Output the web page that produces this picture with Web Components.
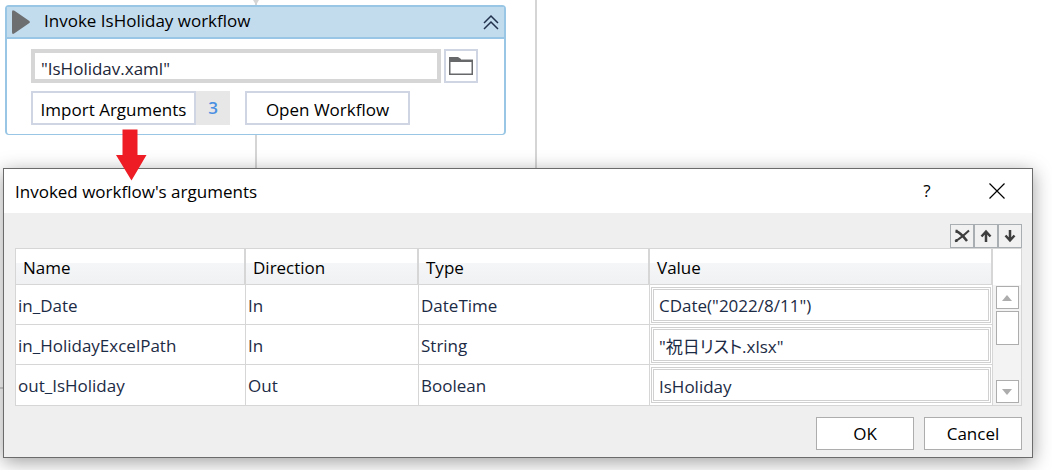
<!DOCTYPE html>
<html lang="en">
<head>
<meta charset="utf-8">
<title>Invoked workflow's arguments</title>
<style>
  body { margin: 0; background: #fff; font: 17px/24px "Open Sans", "Noto Sans CJK JP", sans-serif; color: #000; }
</style>
</head>
<body>
<workflow-canvas>
  <activity-card slot="activity">
    <span slot="title">Invoke IsHoliday workflow</span>
    <path-picker value='"IsHolidav.xaml"'></path-picker>
    <action-row count="3">
      <span slot="import">Import Arguments</span>
      <span slot="open">Open Workflow</span>
    </action-row>
  </activity-card>
  <args-dialog>
    <span slot="title">Invoked workflow's arguments</span>
    <row-tools></row-tools>
    <args-table></args-table>
    <dialog-button slot="footer">OK</dialog-button>
    <dialog-button slot="footer">Cancel</dialog-button>
  </args-dialog>
  <red-arrow slot="pointer"></red-arrow>
</workflow-canvas>

<script>
const base = `<style>
  * { box-sizing: border-box; }
  :host { display: block; box-sizing: border-box; }
  button, input { font: inherit; color: inherit; margin: 0; border-radius: 0; }
  button { padding: 0; background: #fff; white-space: nowrap; }
  svg { display: block; }
</style>`;

function define(name, render) {
  customElements.define(name, class extends HTMLElement {
    constructor() {
      super();
      this.attachShadow({ mode: 'open' });
    }
    connectedCallback() {
      this.shadowRoot.innerHTML = base + render(this);
    }
  });
}

const esc = s => s.replace(/&/g, '&amp;').replace(/"/g, '&quot;');

define('workflow-canvas', () => `<style>
  :host { position: relative; min-height: 100vh; overflow: hidden; padding: 5px 19px 12px 3px; }
  .line { position: absolute; background: #d5d5d5; z-index: 0; }
  .in { left: 255px; top: 0; width: 2px; height: 168px; }
  .edge { left: 535px; top: 0; width: 2px; height: 168px; }
  .side { left: 0; top: 387px; width: 4px; height: 2px; }
  .tip { position: absolute; left: 252px; top: 0; }
  ::slotted(*) { position: relative; }
  ::slotted([slot=pointer]) { position: absolute; left: 115px; top: 129px; }
</style>
<div class="line in"></div><div class="line edge"></div><div class="line side"></div>
<svg class="tip" width="8" height="5" aria-hidden="true"><path d="M1 0h6L4 5z" fill="#d5d5d5"/></svg>
<slot name="activity"></slot><slot></slot><slot name="pointer"></slot>`);

define('activity-card', () => `<style>
  :host { max-width: 501px; margin: 0 0 33px 2px; border: 2px solid #98c6e4; border-bottom-width: 1px; border-radius: 4px; background: #fff; }
  header { display: flex; align-items: center; height: 32px; padding: 0 5px; background: #c2dcee; border-bottom: 2px solid #98c6e4; }
  .name { flex: 1; margin-left: 14px; padding-bottom: 2px; }
  .fold { border: 0; background: none; }
  .body { display: grid; gap: 8px; padding: 10px 26px 9px 24px; }
</style>
<header>
  <svg width="18" height="24" viewBox="0 0 18 24" aria-hidden="true"><path d="M0 2V22Q0 25 2.500 23.200L17 13.300Q18.800 12 17 10.700L2.500 .8Q0-1 0 2z" fill="#6d6e70"/></svg>
  <span class="name"><slot name="title"></slot></span>
  <button class="fold" aria-label="Collapse"><svg width="16" height="16" viewBox="0 0 16 16" fill="none" stroke="#22324c" stroke-width="1.500"><path d="M1 9L8 2l7 7M1 15l7-7 7 7"/></svg></button>
</header>
<div class="body"><slot></slot></div>`);

define('path-picker', el => `<style>
  :host { display: flex; gap: 3px; }
  input { flex: 1; min-width: 0; height: 34px; padding: 5px 6px 0; border: 4px solid #d6d6d6; outline: 0; background: #fff; color: #1c2638; }
  button { width: 34px; height: 34px; border: 2px solid #d0d5e4; display: grid; place-items: center; }
</style>
<input type="text" aria-label="Workflow file name" value="${esc(el.getAttribute('value'))}">
<button aria-label="Browse"><svg width="24" height="18" viewBox="0 0 24 18"><path d="M0 0h9l3 2h12v16H0z" fill="#66686a"/><path d="M12 2h12v1H12z" fill="#b8b9ba"/><path d="M1.500 5h21v11.500h-21z" fill="#fff"/></svg></button>`);

define('action-row', el => `<style>
  :host { display: flex; }
  button { width: 165px; height: 34px; padding-top: 3px; border: 2px solid #d0d5e4; }
  .count { width: 34px; margin-right: 15px; background: #e7e7e7; color: #4a8fe2; font-weight: 600; text-align: center; line-height: 34px; }
</style>
<button><slot name="import"></slot></button><span class="count">${el.getAttribute('count')}</span><button><slot name="open"></slot></button>`);

define('red-arrow', () => `<svg width="32" height="52" viewBox="0 0 32 52" aria-hidden="true"><path d="M7.500 .5h15V26H31.500L16.500 51.500 1 26h6.500z" fill="#ee1c25"/></svg>`);

define('args-dialog', () => `<style>
  :host { border: 1px solid #6b6b6b; background: #efefef; box-shadow: 0 4px 18px rgba(0,0,0,.38); }
  header { display: flex; align-items: center; height: 44px; padding: 0 27px 0 11px; background: #fff; }
  .name { flex: 1; padding-top: 1px; }
  header button { border: 0; background: none; width: 16px; display: grid; place-items: center; }
  .help { margin-right: 54px; }
  .body { padding: 11px 10px 11px 11px; }
  footer { display: flex; justify-content: flex-end; gap: 10px; padding: 0 10px 7px; }
</style>
<header>
  <span class="name"><slot name="title"></slot></span>
  <button class="help" aria-label="Help">?</button>
  <button aria-label="Close"><svg width="16" height="16" viewBox="0 0 16 16" stroke="#000" stroke-width="1.200"><path d="M.5 .5l15 15M15.500 .5l-15 15"/></svg></button>
</header>
<div class="body"><slot></slot></div>
<footer><slot name="footer"></slot></footer>`);

define('row-tools', () => `<style>
  :host { display: flex; justify-content: flex-end; }
  button { width: 24px; height: 24px; display: grid; place-items: center; border: 1px solid #a9aeb3; background: #f1f1f1; }
  svg { fill: none; stroke: #3e3e3e; stroke-width: 2.500; }
</style>
<button aria-label="Delete argument"><svg width="16" height="14" viewBox="0 0 16 14"><path d="M2 2Q7 4 13 12" stroke-width="2.500"/><path d="M1 12.500Q7 9 15 1.500" stroke-width="2"/><path d="M1.500 2.200h2M1.500 11.500h2" stroke-width="3"/></svg></button>
<button aria-label="Move up"><svg width="12" height="14" viewBox="0 0 12 14"><path d="M6 13V2M1.500 7.500L6 2.500l4.500 5"/></svg></button>
<button aria-label="Move down"><svg width="12" height="14" viewBox="0 0 12 14"><path d="M6 1v11M1.500 6.500L6 11.500l4.500-5"/></svg></button>`);

const rows = [
  ['in_Date', 'In', 'DateTime', 'CDate("2022/8/11")'],
  ['in_HolidayExcelPath', 'In', 'String', '"祝日リスト.xlsx"'],
  ['out_IsHoliday', 'Out', 'Boolean', 'IsHoliday'],
];

define('args-table', () => `<style>
  :host { display: flex; border: 1px solid #d6d6d6; background: #fff; }
  table { flex: 1; min-width: 0; table-layout: fixed; border-collapse: separate; border-spacing: 0; color: #1c2b45; }
  .c1 { width: 230px; } .c2 { width: 173px; } .c3 { width: 231px; }
  th { height: 36px; padding: 2px 0 0 7px; border-right: 2px solid #d6d6d6; border-bottom: 1px solid #d6d6d6; text-align: left; font-weight: 400; color: #000;
       background: linear-gradient(#fff 40%, #f4f6f8 41%, #f0f1f3); }
  td { height: 40px; padding: 2px 0 0 2px; border-right: 1px solid #d6d6d6; border-bottom: 1px solid #d6d6d6; }
  tr:last-child td { border-bottom: 0; }
  td:last-child { padding: 1px; }
  input { display: block; width: 100%; height: 36px; padding: 2px 5px 0; border: 3px double #d0d0d0; outline: 0; background: #fff; font-feature-settings: "palt"; }
  .bar { width: 28px; display: flex; flex-direction: column; align-items: center; gap: 2px; padding: 37px 0 2px; background: linear-gradient(#fff 36px, #f3f3f3 36px); }
  .bar button { width: 23px; height: 23px; display: grid; place-items: center; border: 1px solid #adadad; }
  .thumb { width: 23px; height: 34px; border: 1px solid #adadad; background: #fff; margin-bottom: auto; }
</style>
<table>
  <colgroup><col class="c1"><col class="c2"><col class="c3"><col></colgroup>
  <thead><tr><th>Name</th><th>Direction</th><th>Type</th><th>Value</th></tr></thead>
  <tbody>${rows.map(([n, d, t, v]) => `<tr><td>${n}</td><td>${d}</td><td>${t}</td><td><input type="text" aria-label="Value of ${n}" value="${esc(v)}"></td></tr>`).join('')}</tbody>
</table>
<div class="bar">
  <button aria-label="Scroll up"><svg width="10" height="6"><path d="M0 6l5-6 5 6z" fill="#adadad"/></svg></button>
  <div class="thumb"></div>
  <button aria-label="Scroll down"><svg width="10" height="6"><path d="M0 0l5 6 5-6z" fill="#adadad"/></svg></button>
</div>`);

define('dialog-button', () => `<style>
  button { width: 98px; height: 33px; border: 1px solid #adadad; }
</style>
<button><slot></slot></button>`);
</script>
</body>
</html>
